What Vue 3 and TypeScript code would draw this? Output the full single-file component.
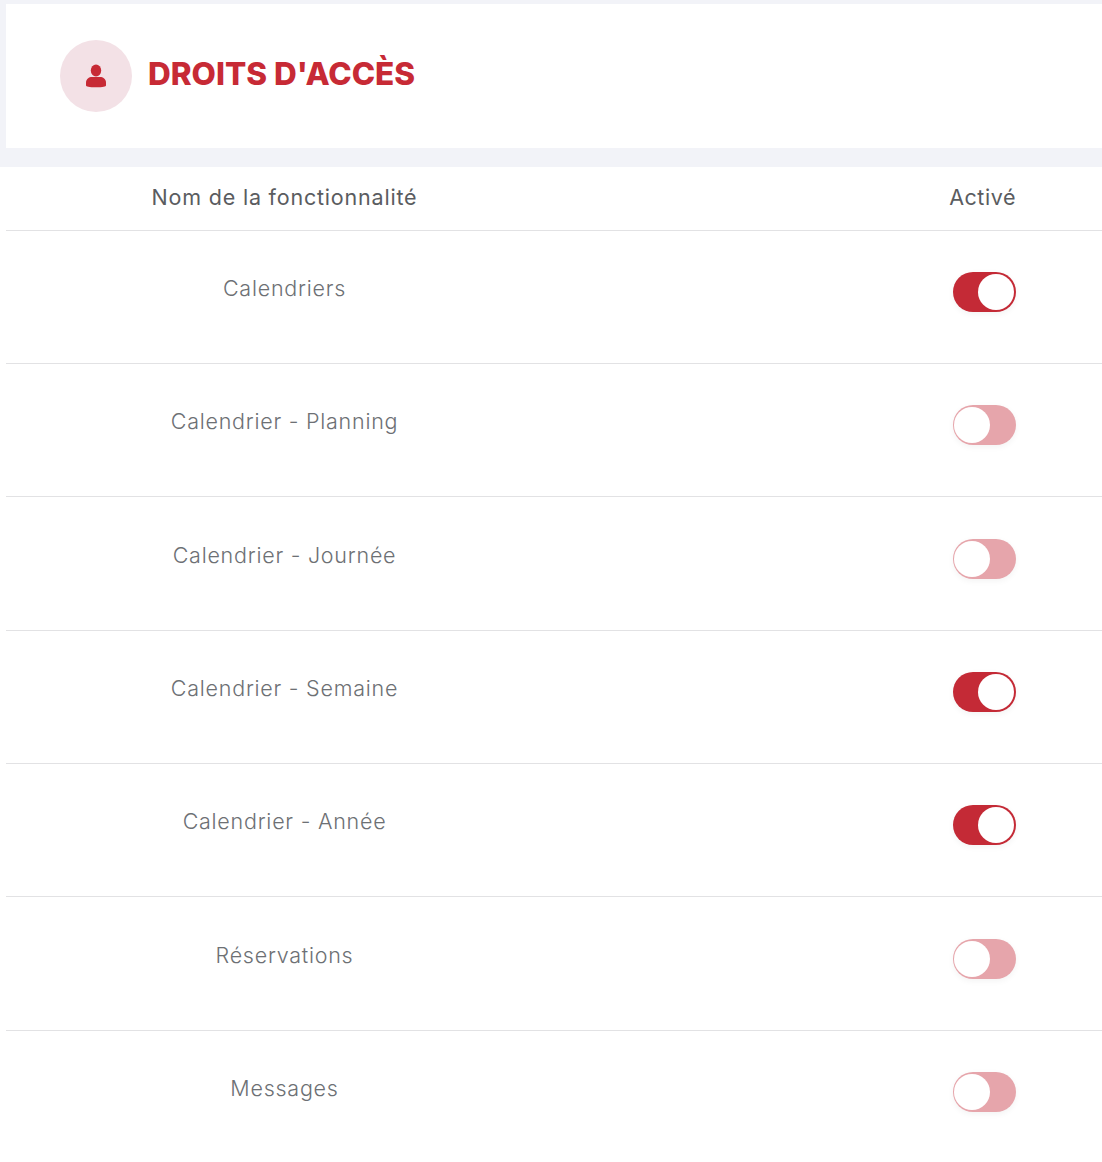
<script setup lang="ts">
interface Feature { name: string; on: boolean }
const features: Feature[] = [
  { name: 'Calendriers', on: true },
  { name: 'Calendrier - Planning', on: false },
  { name: 'Calendrier - Journée', on: false },
  { name: 'Calendrier - Semaine', on: true },
  { name: 'Calendrier - Année', on: true },
  { name: 'Réservations', on: false },
  { name: 'Messages', on: false },
]
</script>

<template>
  <main class="page">
    <header class="card">
      <span class="badge">
        <svg width="22" height="26" viewBox="0 0 22 26" aria-hidden="true">
          <ellipse cx="11" cy="7.500" rx="5.200" ry="6" fill="#c72a35" />
          <path d="M1 19.500C1 16 4 14 7 14h8c3 0 6 2 6 5.500v3c0 1-3 1.800-10 1.800S1 23.500 1 22.500z" fill="#c72a35" />
        </svg>
      </span>
      <h1 class="title">DROITS D'ACCÈS</h1>
    </header>
    <section class="table">
      <div class="row head">
        <div class="name">Nom de la fonctionnalité</div>
        <div class="active">Activé</div>
      </div>
      <div v-for="f in features" :key="f.name" class="row item">
        <div class="name">{{ f.name }}</div>
        <div class="switch" :class="{ on: f.on }"><span class="knob"></span></div>
      </div>
    </section>
  </main>
</template>

<style>
html, body { margin: 0; background: #fff; }
</style>

<style scoped>
.page {
  width: 1102px;
  height: 1162px;
  overflow: hidden;
  background: #f2f3f8;
  padding-top: 4px;
  box-sizing: border-box;
  font-family: Inter, "Open Sans", sans-serif;
}
.card {
  margin-left: 6px;
  height: 144px;
  background: #fff;
  display: flex;
  align-items: center;
  padding-left: 54px;
  gap: 16px;
  box-sizing: border-box;
}
.badge {
  width: 72px;
  height: 72px;
  border-radius: 50%;
  background: #f3e1e6;
  display: flex;
  align-items: center;
  justify-content: center;
}
.title {
  margin: 0 0 4px;
  font-size: 31.5px;
  font-weight: 800;
  line-height: 40px;
  color: #c72a35;
  letter-spacing: 0;
}
.table {
  margin-top: 19px;
  background: #fff;
  padding-left: 6px;
  height: 995px;
}
.row {
  display: grid;
  grid-template-columns: 557px 1fr;
  padding-right: 86px;
  border-bottom: 1px solid #e2e2e4;
  box-sizing: border-box;
}
.row:last-child { border-bottom: none; }
.head {
  height: 63.67px;
  align-items: center;
  color: #5a5c60;
  font-size: 21.5px;
}
.head .name { text-align: center; font-weight: 400; margin-bottom: 2px; letter-spacing: 0.8px; }
.active { text-align: right; margin-bottom: 2px; letter-spacing: 0.55px; }
.item {
  height: 133.33px;
  padding-top: 41.3px;
  align-items: start;
}
.item .name {
  text-align: center;
  font-size: 21.5px;
  font-weight: 300;
  letter-spacing: 0.75px;
  line-height: 32px;
  color: #6d7074;
}
.switch {
  justify-self: end;
  width: 63px;
  height: 40px;
  border-radius: 20px;
  background: #e6a5ab;
  padding: 2px 1px;
  box-sizing: border-box;
  display: flex;
  box-shadow: 0 2px 6px rgba(0, 0, 0, 0.05);
}
.switch.on {
  background: #c42a36;
  justify-content: flex-end;
  padding-right: 2px;
}
.knob {
  width: 36px;
  height: 36px;
  border-radius: 50%;
  background: #fff;
}
</style>
